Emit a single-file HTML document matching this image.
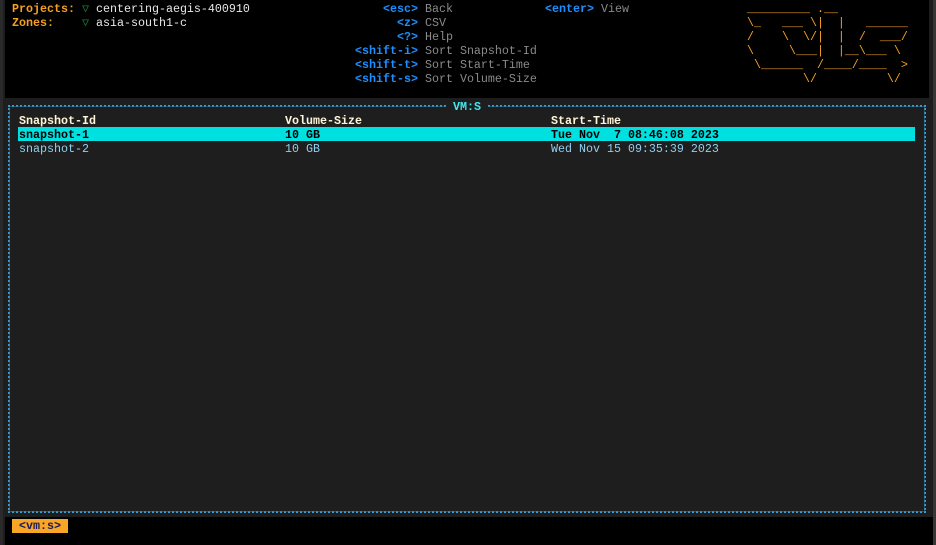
<!DOCTYPE html><html><head><style>
body{margin:0;width:936px;height:545px;background:#1e1e1e;overflow:hidden;position:relative;font-family:"Liberation Mono",monospace;font-size:11.67px;line-height:14px}
.a{position:absolute;white-space:pre}
.o{color:#f5a020;font-weight:bold}
.w{color:#e8e8e8}
.g{color:#1f7a3a}
.k{color:#1e8fff;font-weight:bold}
.d{color:#8a8a8a}
.l{color:#f5a020}
</style></head><body>
<div class="a" style="left:5px;top:0;width:924px;height:98px;background:#000"></div>
<div class="a" style="left:933px;top:0;width:3px;height:545px;background:#3a3636"></div>
<div class="a" style="left:0;top:0;width:3px;height:545px;background:#2a2a2a"></div>
<div class="a" style="left:12px;top:2px"><span class="o">Projects:</span> <span class="g">▽</span> <span class="w">centering-aegis-400910</span>
<span class="o">Zones:</span>    <span class="g">▽</span> <span class="w">asia-south1-c</span></div>
<div class="a" style="left:355px;top:2px">    <span class="k">&lt;esc&gt;</span> <span class="d">Back</span>
      <span class="k">&lt;z&gt;</span> <span class="d">CSV</span>
      <span class="k">&lt;?&gt;</span> <span class="d">Help</span>
<span class="k">&lt;shift-i&gt;</span> <span class="d">Sort Snapshot-Id</span>
<span class="k">&lt;shift-t&gt;</span> <span class="d">Sort Start-Time</span>
<span class="k">&lt;shift-s&gt;</span> <span class="d">Sort Volume-Size</span></div>
<div class="a" style="left:545px;top:2px"><span class="k">&lt;enter&gt;</span> <span class="d">View</span></div>
<div class="a l" style="left:747px;top:2px">_________ .__
\_   ___ \|  |   ______
/    \  \/|  |  /  ___/
\     \___|  |__\___ \
 \______  /____/____  >
        \/          \/</div>
<div class="a" style="left:8px;top:105px;width:914px;height:404px;border:2px dotted #3a9fd0;outline:1px solid rgba(40,120,160,.6);outline-offset:-2px"></div>
<div class="a" style="left:446px;top:100px;background:#1e1e1e;color:#40e8f0;font-weight:bold"> VM:S </div>
<div class="a" style="left:19px;top:114px;color:#fff5d8;font-weight:bold">Snapshot-Id</div>
<div class="a" style="left:285px;top:114px;color:#fff5d8;font-weight:bold">Volume-Size</div>
<div class="a" style="left:551px;top:114px;color:#fff5d8;font-weight:bold">Start-Time</div>
<div class="a" style="left:18px;top:127px;width:897px;height:14px;background:#00e0e0"></div>
<div class="a" style="left:19px;top:128px;color:#000;font-weight:bold">snapshot-1</div>
<div class="a" style="left:285px;top:128px;color:#000;font-weight:bold">10 GB</div>
<div class="a" style="left:551px;top:128px;color:#000;font-weight:bold">Tue Nov  7 08:46:08 2023</div>
<div class="a" style="left:19px;top:142px;color:#8fd0f0">snapshot-2</div>
<div class="a" style="left:285px;top:142px;color:#8fd0f0">10 GB</div>
<div class="a" style="left:551px;top:142px;color:#8fd0f0">Wed Nov 15 09:35:39 2023</div>
<div class="a" style="left:5px;top:517px;width:928px;height:28px;background:#000"></div>
<div class="a" style="left:12px;top:519px;width:56px;height:14px;background:#f9a526;color:#1a1a60;font-weight:bold;text-align:center;line-height:15px">&lt;vm:s&gt;</div>
</body></html>
